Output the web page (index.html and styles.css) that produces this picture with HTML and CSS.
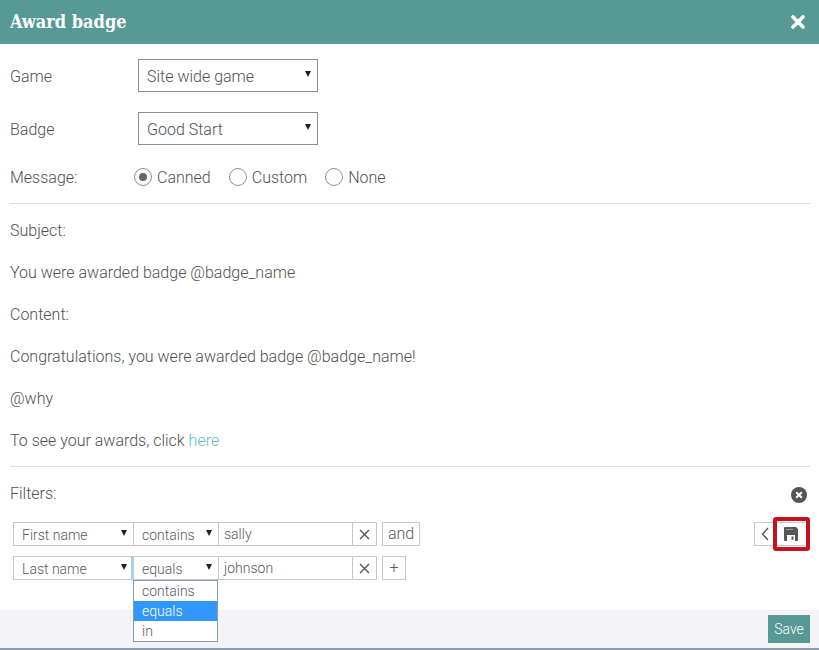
FILE: index.html
```html
<!DOCTYPE html>
<html lang="en">
<head>
<meta charset="utf-8">
<title>Award badge</title>
<link rel="stylesheet" href="styles.css">
</head>
<body>
<div class="dialog">
  <header class="head">
    <h1 class="title">Award badge</h1>
    <svg class="close" width="14" height="14" viewBox="0 0 14 14"><path d="M2 2l10 10M12 2L2 12" stroke="#fff" stroke-width="3.600" stroke-linecap="round"/></svg>
  </header>
  <main class="body">
    <div class="field first">
      <label class="lbl">Game</label>
      <div class="select"><span>Site wide game</span><i class="caret"></i></div>
    </div>
    <div class="field">
      <label class="lbl">Badge</label>
      <div class="select"><span>Good Start</span><i class="caret"></i></div>
    </div>
    <div class="radios">
      <span class="radio-lbl">Message:</span>
      <span class="radio on"><i class="dot"></i>Canned</span>
      <span class="radio"><i class="dot"></i>Custom</span>
      <span class="radio"><i class="dot"></i>None</span>
    </div>
    <div class="msg">
      <p>Subject:</p>
      <p>You were awarded badge @badge_name</p>
      <p>Content:</p>
      <p>Congratulations, you were awarded badge @badge_name!</p>
      <p>@why</p>
      <p>To see your awards, click <a href="#" class="link">here</a></p>
    </div>
    <div class="filters">
      <div class="filters-head">
        <span>Filters:</span>
        <svg class="clear" width="16" height="16" viewBox="0 0 16 16"><circle cx="8" cy="8" r="8" fill="#555"/><path d="M5.200 5.200l5.600 5.600M10.800 5.200l-5.600 5.600" stroke="#fff" stroke-width="2"/></svg>
      </div>
      <div class="frow">
        <div class="fsel w-a"><span>First name</span><i class="caret"></i></div>
        <div class="fsel w-b"><span>contains</span><i class="caret"></i></div>
        <div class="finput"><span>sally</span></div>
        <div class="fx"><svg width="11" height="11" viewBox="0 0 11 11"><path d="M1 1l9 9M10 1l-9 9" stroke="#555" stroke-width="1.400"/></svg></div>
        <div class="fbtn">and</div>
        <div class="fright">
          <div class="fback"><svg width="8" height="14" viewBox="0 0 8 14"><path d="M7 1L1.500 7 7 13" fill="none" stroke="#555" stroke-width="1.400"/></svg></div>
          <div class="fsave">
            <svg width="14" height="14" viewBox="0 0 14 14"><path fill="#555" fill-rule="evenodd" d="M0 1A1 1 0 0 1 1 0H12L14 2V13A1 1 0 0 1 13 14H1A1 1 0 0 1 0 13ZM3 8V14H11V8ZM7.500 9.500H9.500V12.800H7.500Z"/><path fill="#999" d="M2 2h7v1H2z"/></svg>
            <span class="mark"></span>
          </div>
        </div>
      </div>
      <div class="frow second">
        <div class="fsel w-a focus"><span>Last name</span><i class="caret"></i></div>
        <div class="fsel w-b"><span>equals</span><i class="caret"></i>
          <ul class="menu">
            <li>contains</li>
            <li class="sel">equals</li>
            <li>in</li>
          </ul>
        </div>
        <div class="finput"><span>johnson</span></div>
        <div class="fx"><svg width="11" height="11" viewBox="0 0 11 11"><path d="M1 1l9 9M10 1l-9 9" stroke="#555" stroke-width="1.400"/></svg></div>
        <div class="fbtn plus">+</div>
      </div>
    </div>
  </main>
  <footer class="foot"><button class="save">Save</button></footer>
</div>
</body>
</html>
```
FILE: styles.css
```css
* { box-sizing: border-box; }
html, body { margin: 0; padding: 0; }
body {
  width: 819px;
  height: 650px;
  overflow: hidden;
  background: #fff;
  font-family: Roboto, "Liberation Sans", sans-serif;
  font-weight: 300;
  font-size: 16px;
  color: #505050;
}
.dialog { display: flex; flex-direction: column; height: 650px; border-bottom: 2px solid #8a9db0; }
.head {
  height: 44px;
  flex: none;
  background: #579a95;
  display: flex;
  align-items: center;
  justify-content: space-between;
  padding: 0 14px 1px 10px;
}
.title {
  margin: 0;
  font-family: "DejaVu Serif Condensed", "DejaVu Serif", serif;
  font-stretch: condensed;
  font-weight: 700;
  font-size: 18px;
  color: #fff;
}
.body { flex: 1; padding: 0 9px 0 10px; position: relative; }
.field { display: flex; align-items: center; height: 33px; margin-top: 20px; }
.field.first { margin-top: 15px; }
.lbl { width: 128px; padding-top: 2px; }
.select {
  width: 180px;
  height: 33px;
  border: 1px solid #8f8f8f;
  display: flex;
  align-items: center;
  justify-content: space-between;
  padding: 0 6px 0 8px;
}
.select span, .fsel span { padding-top: 2px; }
.caret {
  width: 0;
  height: 0;
  border-left: 3.500px solid transparent;
  border-right: 3.500px solid transparent;
  border-top: 6px solid #222;
  margin-top: -3px;
}
.radios {
  display: flex;
  align-items: center;
  height: 22px;
  margin-top: 21px;
}
.radio-lbl { width: 124px; }
.radio { display: flex; align-items: center; margin-right: 18px; }
.dot {
  width: 18px;
  height: 18px;
  border: 1px solid #8f8f8f;
  border-radius: 50%;
  margin-right: 5px;
  display: flex;
  align-items: center;
  justify-content: center;
}
.radio.on .dot::before {
  content: "";
  width: 8px;
  height: 8px;
  border-radius: 50%;
  background: #666;
}
.msg {
  margin-top: 15px;
  padding-top: 16px;
  border-top: 1px solid #ddd;
  border-bottom: 1px solid #ddd;
}
.msg p { margin: 0 0 20px; line-height: 22px; }
.msg p:last-child { margin-bottom: 14px; }
.link { color: #5cc2b8; text-decoration: none; }
.filters { padding-top: 15px; }
.filters-head {
  display: flex;
  align-items: center;
  justify-content: space-between;
  height: 22px;
  margin-bottom: 18px;
  padding-right: 3px;
}
.clear { margin-top: 4px; }
.frow { display: flex; align-items: stretch; height: 24px; margin-left: 3px; font-size: 14px; color: #5a5a5a; }
.frow.second { margin-top: 10px; }
.fsel {
  position: relative;
  display: flex;
  align-items: center;
  justify-content: space-between;
  border: 1px solid #c8c8cc;
  padding: 0 6px 0 8px;
}
.w-a { width: 121px; }
.w-b { width: 86px; margin-left: -1px; }
.focus::after {
  content: "";
  position: absolute;
  right: -1px;
  top: -1px;
  bottom: -1px;
  width: 3px;
  background: #a9cdea;
  z-index: 1;
}
.finput {
  width: 135px;
  margin-left: -1px;
  border: 1px solid #c8c8cc;
  display: flex;
  align-items: center;
  padding: 0 5px;
}
.fx {
  width: 25px;
  margin-left: -1px;
  border: 1px solid #c8c8cc;
  display: flex;
  align-items: center;
  justify-content: center;
}
.fbtn {
  margin-left: 5px;
  border: 1px solid #c8c8cc;
  display: flex;
  align-items: center;
  justify-content: center;
  padding: 0 5px 2px;
  font-size: 16px;
  width: 38px;
}
.fbtn.plus { width: 24px; padding: 0 0 2px; }
.fright { margin-left: auto; display: flex; margin-right: 3px; }
.fback {
  width: 22px;
  border: 1px solid #c8c8cc;
  display: flex;
  align-items: center;
  justify-content: center;
}
.fsave {
  position: relative;
  width: 32px;
  margin-left: -1px;
  display: flex;
  align-items: center;
  justify-content: center;
  border: 1px solid #c8c8cc;
}
.mark {
  position: absolute;
  left: -3px;
  top: -6px;
  width: 37px;
  height: 34px;
  border: 4px solid #c8101e;
  border-radius: 3px;
}
.menu {
  position: absolute;
  left: -1px;
  top: 23px;
  width: 85px;
  margin: 0;
  padding: 0;
  list-style: none;
  background: #fff;
  border: 1px solid #7f9db9;
  z-index: 3;
}
.menu li { height: 20px; line-height: 20px; padding-left: 8px; }
.menu .sel { background: #3297fd; color: #fff; }
.foot {
  height: 38px;
  flex: none;
  background: #f4f3f6;
  display: flex;
  align-items: center;
  justify-content: flex-end;
  padding-right: 9px;
}
.save {
  width: 42px;
  height: 28px;
  border: 0;
  padding: 0;
  background: #579a95;
  color: #fff;
  font: 300 14px Roboto, "Liberation Sans", sans-serif;
}
```
